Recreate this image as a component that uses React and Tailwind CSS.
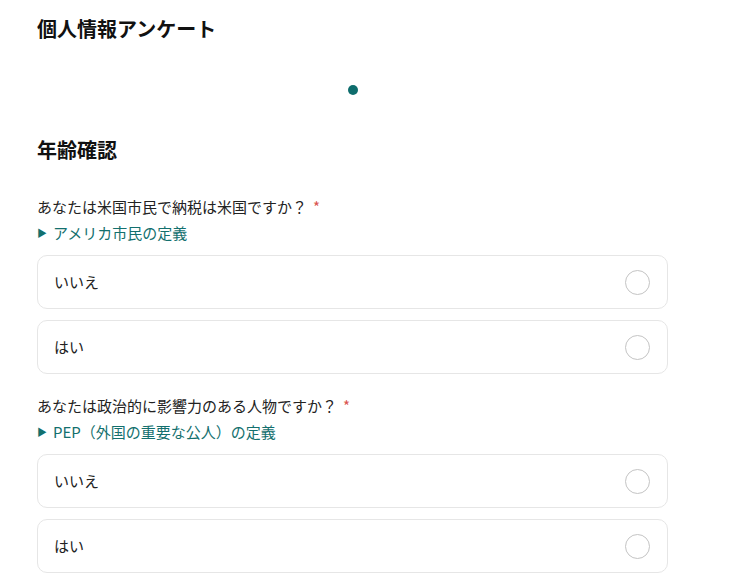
import React from "react";

const questions = [
  {
    label: "あなたは米国市民で納税は米国ですか？",
    link: "アメリカ市民の定義",
  },
  {
    label: "あなたは政治的に影響力のある人物ですか？",
    link: "PEP（外国の重要な公人）の定義",
  },
];

function Option({ text }) {
  return (
    <label className="flex items-center justify-between h-[54px] pl-4 pr-[17px] border border-[#e6e6e6] rounded-[10px] bg-white cursor-pointer">
      <span className="text-[15px] text-[#222]">{text}</span>
      <span className="w-[25px] h-[25px] rounded-full border border-[#c4c4c4]" />
    </label>
  );
}

export default function App() {
  return (
    <div
      className="min-h-screen bg-white px-[37px] pt-[15px]"
      style={{ fontFamily: '"Noto Sans CJK JP", "Noto Sans", sans-serif' }}
    >
      <div className="w-[631px]">
        <h1 className="text-[20px] leading-[28px] font-bold text-[#111]">
          個人情報アンケート
        </h1>

        {/* progress dot */}
        <div className="flex justify-center mt-[42px]">
          <span className="w-[10px] h-[10px] rounded-full bg-[#0e6d6d]" />
        </div>

        <h2 className="mt-[41px] text-[20px] leading-[28px] font-bold text-[#111]">
          年齢確認
        </h2>

        {questions.map((q, i) => (
          <div key={i} className={i === 0 ? "mt-[32px]" : "mt-[21px]"}>
            <p className="text-[15px] leading-[22px] text-[#222]">
              {q.label}
              <span className="text-[#d9534f] ml-[6px]">*</span>
            </p>
            <p className="mt-[4px] flex items-center text-[15px] leading-[22px] text-[#13706e]">
              <span className="text-[10px] mr-[6px] text-[#13706e]">▶</span>
              {q.link}
            </p>
            <div className="mt-[11px] flex flex-col gap-[11px]">
              <Option text="いいえ" />
              <Option text="はい" />
            </div>
          </div>
        ))}
      </div>
    </div>
  );
}
